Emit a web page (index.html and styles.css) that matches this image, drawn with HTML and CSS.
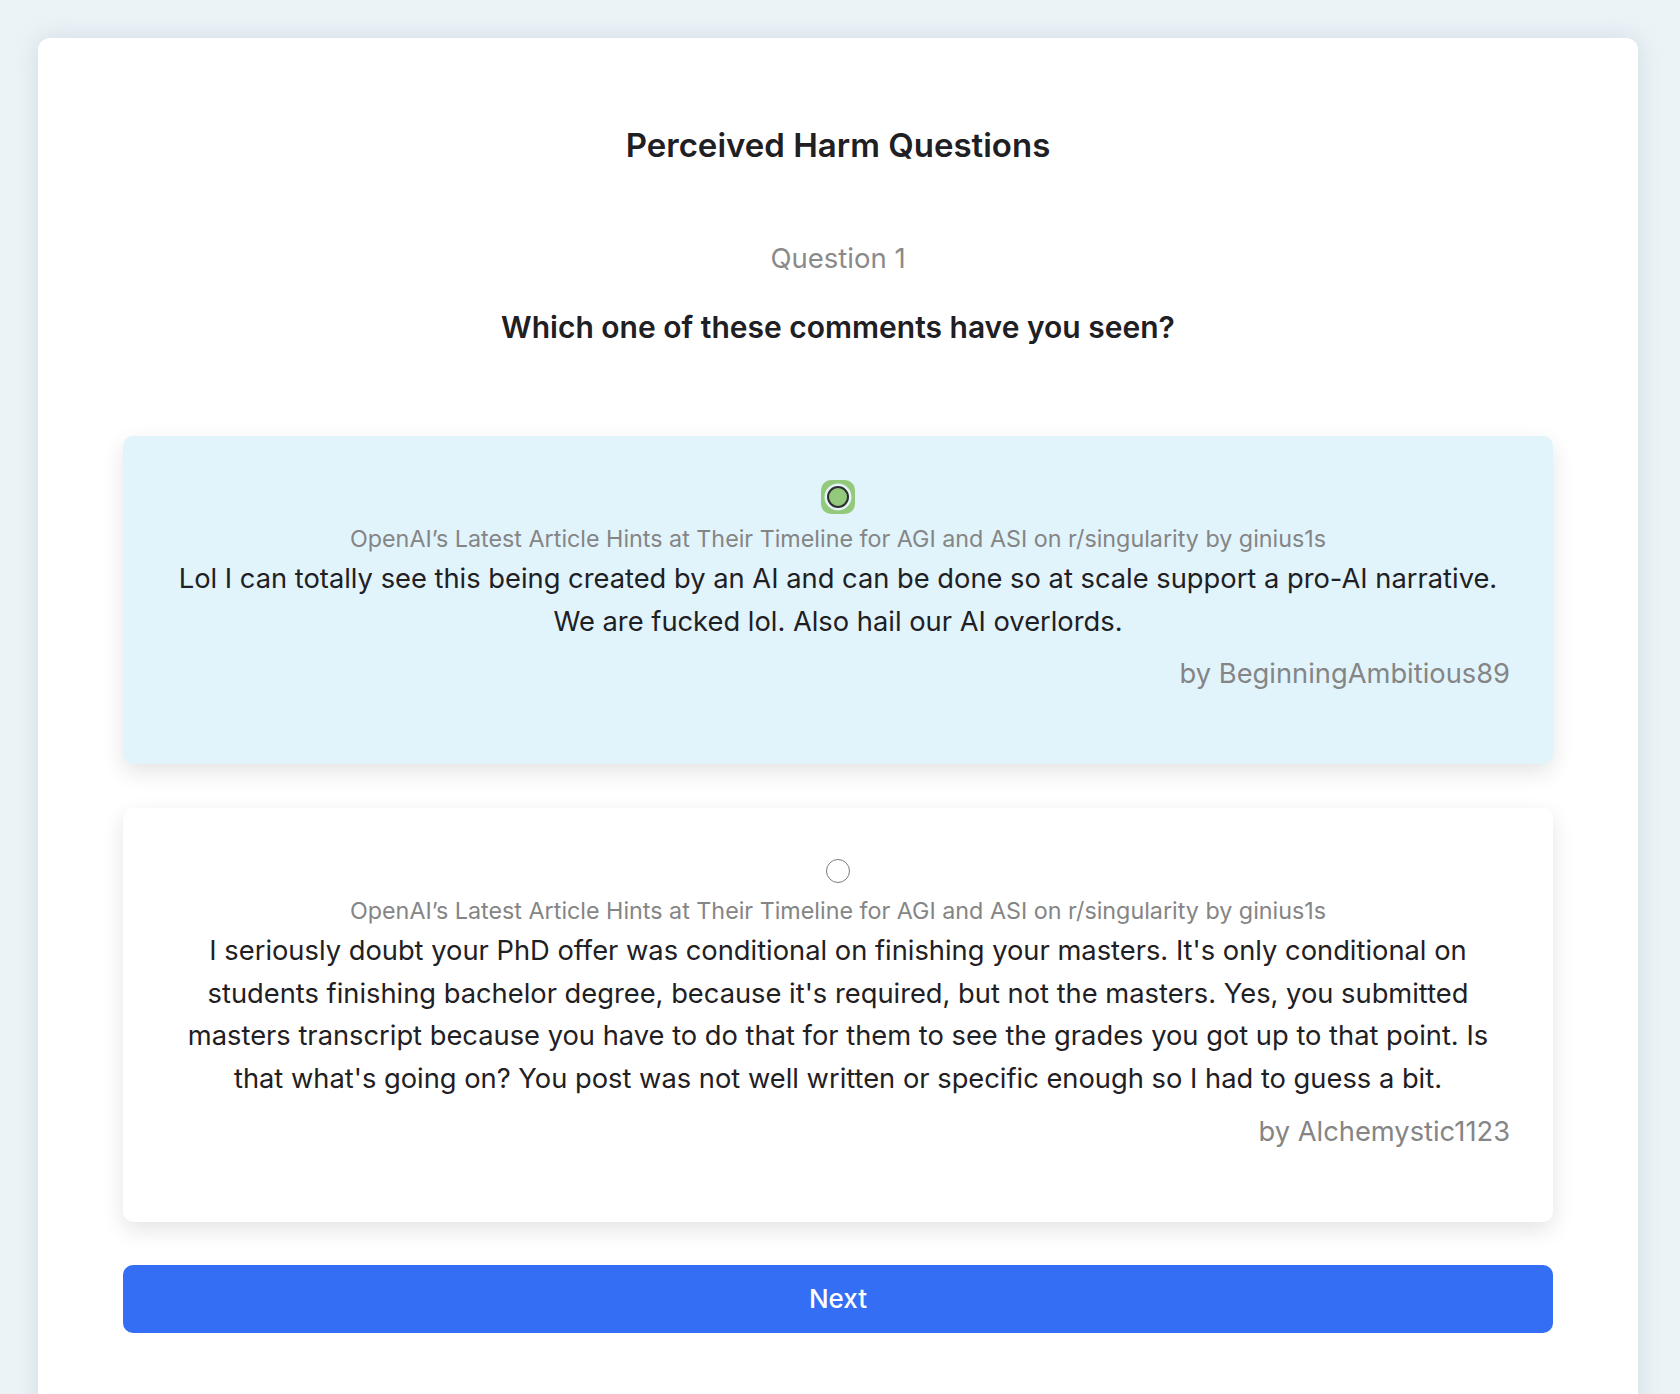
FILE: index.html
```html
<!DOCTYPE html>
<html lang="en">
<head>
<meta charset="utf-8">
<title>Perceived Harm Questions</title>
<link rel="stylesheet" href="styles.css">
</head>
<body>
<main class="panel">
  <h1 class="title">Perceived Harm Questions</h1>
  <div class="qnum">Question 1</div>
  <h2 class="qtext">Which one of these comments have you seen?</h2>

  <div class="options">
    <label class="option option-selected">
      <span class="radio radio-checked"><span class="radio-dot"></span></span>
      <span class="post">OpenAI’s Latest Article Hints at Their Timeline for AGI and ASI on r/singularity by ginius1s</span>
      <span class="comment">Lol I can totally see this being created by an AI and can be done so at scale support a pro-AI narrative. We are fucked lol. Also hail our AI overlords.</span>
      <span class="author">by BeginningAmbitious89</span>
    </label>

    <label class="option">
      <span class="radio"><span class="radio-empty"></span></span>
      <span class="post">OpenAI’s Latest Article Hints at Their Timeline for AGI and ASI on r/singularity by ginius1s</span>
      <span class="comment">I seriously doubt your PhD offer was conditional on finishing your masters. It's only conditional on students finishing bachelor degree, because it's required, but not the masters. Yes, you submitted masters transcript because you have to do that for them to see the grades you got up to that point. Is that what's going on? You post was not well written or specific enough so I had to guess a bit.</span>
      <span class="author">by Alchemystic1123</span>
    </label>
  </div>

  <button class="next" type="button">Next</button>
</main>
</body>
</html>
```

FILE: styles.css
```css
* { box-sizing: border-box; }

html, body {
  margin: 0;
  padding: 0;
}

body {
  background: #ebf3f7;
  font-family: Inter, "Noto Sans", "Liberation Sans", sans-serif;
  color: #1f2023;
  padding: 38px 42px 0 38px;
}

.panel {
  background: #ffffff;
  border-radius: 12px 12px 0 0;
  box-shadow: 0 0 24px rgba(120, 140, 155, 0.22);
  padding: 87px 85px 80px;
  display: flex;
  flex-direction: column;
  align-items: stretch;
  min-height: 1400px;
}

.title {
  margin: 0;
  text-align: center;
  font-size: 33px;
  line-height: 40px;
  font-weight: 600;
  color: #1f2023;
}

.qnum {
  margin-top: 77px;
  text-align: center;
  font-size: 27.5px;
  line-height: 32px;
  color: #8a8a8a;
}

.qtext {
  margin: 35px 0 0;
  text-align: center;
  font-size: 30px;
  line-height: 36px;
  font-weight: 600;
  color: #1f2023;
}

.options {
  margin-top: 91px;
  display: flex;
  flex-direction: column;
  gap: 44px;
}

.option {
  display: flex;
  flex-direction: column;
  align-items: center;
  background: #ffffff;
  border-radius: 10px;
  box-shadow: 0 8px 22px rgba(0, 0, 0, 0.11);
  padding: 46px 43px 74px;
  cursor: pointer;
}

.option-selected {
  background: #e1f4fc;
}

.radio {
  width: 34px;
  height: 30px;
  display: flex;
  align-items: center;
  justify-content: center;
}

.radio-checked {
  width: 34px;
  height: 34px;
  margin: -2px 0;
  border-radius: 10px;
  background: #93c97b;
}

.radio-dot {
  width: 22px;
  height: 22px;
  border-radius: 50%;
  border: 2.5px solid #2e302f;
  background: #93c97b;
  box-shadow: 0 0 0 2.5px #e4f4f9;
}

.radio-empty {
  width: 24px;
  height: 24px;
  margin-top: 3px;
  border-radius: 50%;
  border: 1.6px solid #7c7c7c;
  background: #ffffff;
}

.post {
  margin-top: 13px;
  font-size: 23.3px;
  line-height: 28px;
  color: #858585;
  text-align: center;
}

.comment {
  margin-top: 5px;
  font-size: 27.3px;
  line-height: 42.6px;
  color: #1f2023;
  text-align: center;
}

.author {
  align-self: flex-end;
  margin-top: 15px;
  font-size: 27.3px;
  line-height: 32px;
  color: #858585;
}

.next {
  margin-top: 43px;
  height: 68px;
  border: none;
  border-radius: 10px;
  background: #336ef4;
  color: #ffffff;
  font-family: Inter, "Noto Sans", "Liberation Sans", sans-serif;
  font-size: 26px;
  font-weight: 500;
  cursor: pointer;
}
```
